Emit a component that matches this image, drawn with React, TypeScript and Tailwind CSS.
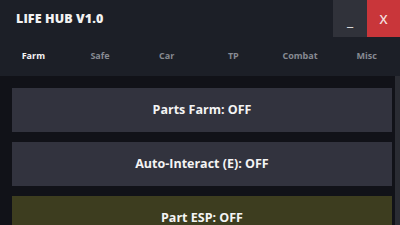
const TABS = ["Farm", "Safe", "Car", "TP", "Combat", "Misc"];

const TOGGLES = [
  { label: "Parts Farm: OFF", className: "bg-[#32333e]" },
  { label: "Auto-Interact (E): OFF", className: "bg-[#32333e]" },
  { label: "Part ESP: OFF", className: "bg-[#3d3d1f]" },
];

export default function App() {
  return (
    <div
      className="flex h-[225px] w-[400px] flex-col overflow-hidden bg-[#1c1f27] text-white"
      style={{ fontFamily: '"Open Sans", "Noto Sans", sans-serif' }}
    >
      <div className="flex h-[37px] shrink-0 items-stretch">
        <div className="flex flex-1 items-center pl-[16px] pt-[2px] text-[12.5px] font-extrabold tracking-[0.1px] text-[#f2f2f2]">
          LIFE HUB V1.0
        </div>
        <button className="flex w-[34px] items-center justify-center bg-[#30323a] pt-[4px] text-[15px] font-bold text-[#d8d8d8]">
          _
        </button>
        <button className="flex w-[33px] items-center justify-center bg-[#c9363a] pt-[2px] text-[13px] font-semibold text-[#f4dede]">
          X
        </button>
      </div>
      <div className="grid h-[39px] shrink-0 grid-cols-6 items-center pb-[2px]">
        {TABS.map((t, i) => (
          <div
            key={t}
            className={
              i === 0
                ? "text-center text-[9px] font-bold text-[#f5f5f5]"
                : "text-center text-[9px] font-bold text-[#878a92]"
            }
          >
            {t}
          </div>
        ))}
      </div>
      <div className="flex flex-1 bg-[#111218]">
        <div className="flex flex-1 flex-col gap-[10px] pl-[12px] pr-[3px] pt-[12px]">
          {TOGGLES.map((b) => (
            <div
              key={b.label}
              className={`flex h-[44px] shrink-0 items-center justify-center text-[12.5px] font-bold text-[#f4f4f4] ${b.className}`}
            >
              {b.label}
            </div>
          ))}
        </div>
        <div className="w-[5px] bg-[#2a2c33]" />
      </div>
    </div>
  );
}
